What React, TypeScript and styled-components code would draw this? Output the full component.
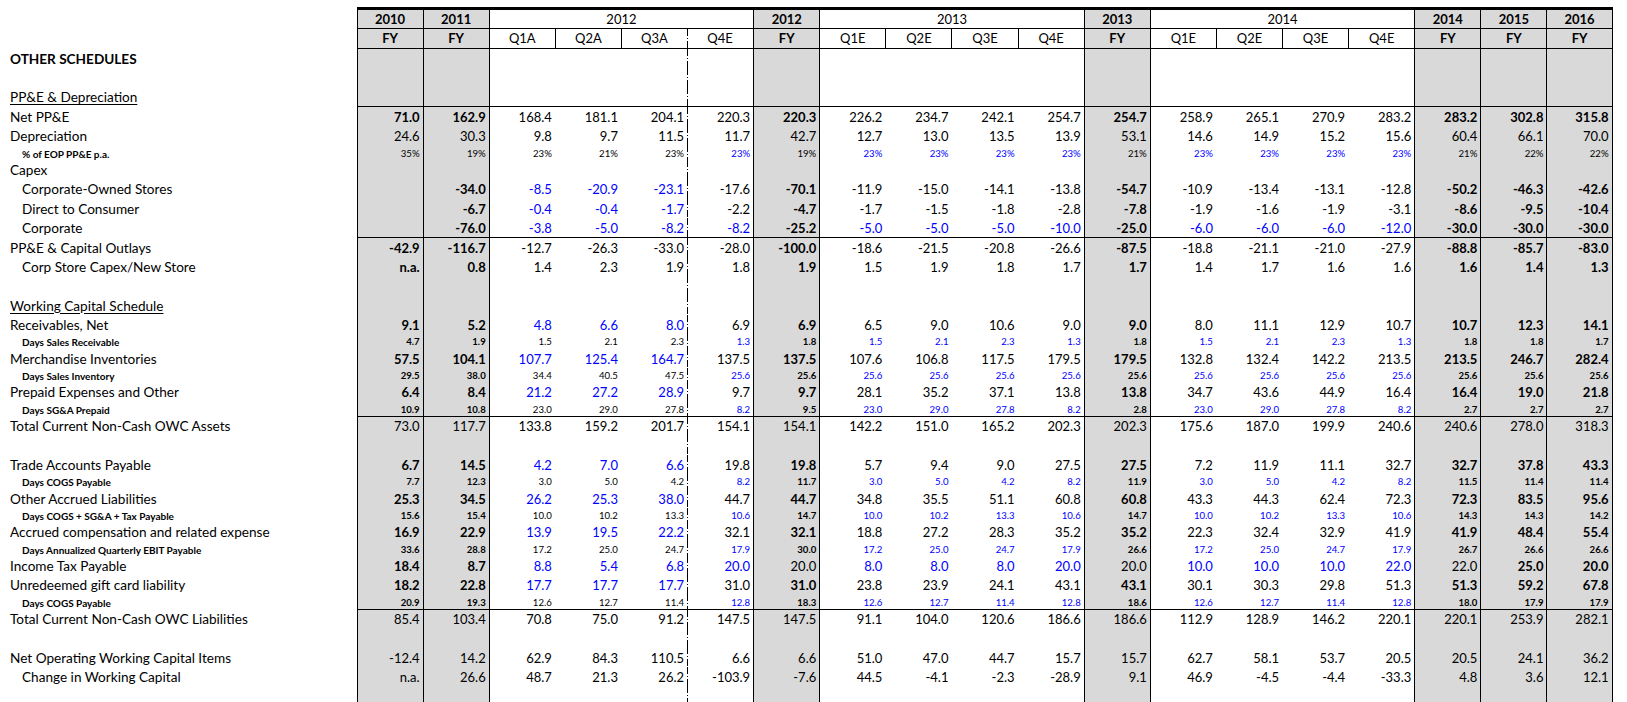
import React from "react";
import styled, { createGlobalStyle, css } from "styled-components";

const N = 19.4;
const S = 14.3;
const LABEL_W = 356.5;
const COL_W = 66.12;

type Lead = "solid" | "dash" | "none";

const GlobalStyle = createGlobalStyle`
  html, body {
    margin: 0;
    padding: 0;
    background: #ffffff;
    overflow: hidden;
  }
  body {
    font-family: Lato, "Liberation Sans", Arial, sans-serif;
    color: #000000;
  }
`;

const Sheet = styled.div`
  display: flex;
  flex-direction: column;
  width: 1627px;
  padding-top: 7px;
`;

const DataCell = styled.div<{
  $fy?: boolean;
  $lead: Lead;
  $last?: boolean;
  $bold?: boolean;
  $blue?: boolean;
  $small?: boolean;
  $center?: boolean;
  $span?: number;
}>`
  box-sizing: border-box;
  min-width: 0;
  display: flex;
  align-items: ${(p) => (p.$center ? "center" : "flex-end")};
  justify-content: ${(p) => (p.$center ? "center" : "flex-end")};
  padding: ${(p) => (p.$center ? "0" : "0 3px 1px 0")};
  grid-column: ${(p) => (p.$span ? `span ${p.$span}` : "auto")};
  background-color: ${(p) => (p.$fy ? "#d9d9d9" : "#ffffff")};
  border-left: ${(p) => (p.$lead === "solid" ? "1px solid #000" : "0")};
  border-right: ${(p) => (p.$last ? "1px solid #000" : "0")};
  ${(p) =>
    p.$lead === "dash" &&
    css`
      background-image: repeating-linear-gradient(
        to bottom,
        #000 0 7px,
        transparent 7px 9px,
        #000 9px 10px,
        transparent 10px 12px
      );
      background-size: 1px 100%;
      background-repeat: no-repeat;
      background-position: left top;
    `}
  font-size: ${(p) => (p.$small ? 9.6 : 13)}px;
  line-height: ${(p) => (p.$small ? 10 : 15)}px;
  font-weight: ${(p) => (p.$bold ? 700 : 400)};
  color: ${(p) => (p.$blue ? "#0000ff" : "#000000")};
  white-space: nowrap;
`;

const Row = styled.div<{ $h: number; $rule?: number }>`
  display: grid;
  grid-template-columns: ${LABEL_W}px repeat(19, ${COL_W}px);
  height: ${(p) => p.$h}px;
  ${(p) =>
    p.$rule
      ? css`
          & > ${DataCell} {
            border-top: ${p.$rule}px solid #000;
          }
        `
      : ""}
`;

const LabelCell = styled.div<{
  $indent?: boolean;
  $small?: boolean;
  $bold?: boolean;
  $underline?: boolean;
}>`
  display: flex;
  align-items: flex-end;
  padding: 0 0 1px ${(p) => (p.$indent || p.$small ? 22 : 10)}px;
  font-size: ${(p) => (p.$small ? 10 : 13.6)}px;
  line-height: ${(p) => (p.$small ? 10 : 15)}px;
  font-weight: ${(p) => (p.$bold || p.$small ? 700 : 400)};
  text-decoration: ${(p) => (p.$underline ? "underline" : "none")};
  text-underline-offset: 2px;
  white-space: nowrap;
`;

const FY_COLS = [0, 1, 6, 11, 16, 17, 18];
const SOLID_COLS = [0, 1, 2, 6, 7, 11, 12, 16, 17, 18];
const A_COLS = [2, 3, 4];
const E_COLS = [5, 7, 8, 9, 10, 12, 13, 14, 15];

const bodyLead = (i: number): Lead =>
  i === 5 ? "dash" : SOLID_COLS.includes(i) ? "solid" : "none";

type BoldSpec = "fy" | "none" | number[];
type BlueSpec = "A" | "E" | "AE" | "none";

interface RowDef {
  label?: string;
  vals?: string;
  small?: boolean;
  indent?: boolean;
  bold?: BoldSpec;
  blue?: BlueSpec;
  rule?: boolean;
  labelBold?: boolean;
  underline?: boolean;
}

const HEAD1: { t: string; fy?: boolean; span?: number }[] = [
  { t: "2010", fy: true },
  { t: "2011", fy: true },
  { t: "2012", span: 4 },
  { t: "2012", fy: true },
  { t: "2013", span: 4 },
  { t: "2013", fy: true },
  { t: "2014", span: 4 },
  { t: "2014", fy: true },
  { t: "2015", fy: true },
  { t: "2016", fy: true },
];

const HEAD2 = [
  "FY", "FY", "Q1A", "Q2A", "Q3A", "Q4E", "FY", "Q1E", "Q2E", "Q3E", "Q4E",
  "FY", "Q1E", "Q2E", "Q3E", "Q4E", "FY", "FY", "FY",
];

const ROWS: RowDef[] = [
  { label: "OTHER SCHEDULES", labelBold: true, rule: true },
  {},
  { label: "PP&E & Depreciation", underline: true },
  {
    label: "Net PP&E", rule: true, bold: "fy",
    vals: "71.0 162.9 168.4 181.1 204.1 220.3 220.3 226.2 234.7 242.1 254.7 254.7 258.9 265.1 270.9 283.2 283.2 302.8 315.8",
  },
  {
    label: "Depreciation",
    vals: "24.6 30.3 9.8 9.7 11.5 11.7 42.7 12.7 13.0 13.5 13.9 53.1 14.6 14.9 15.2 15.6 60.4 66.1 70.0",
  },
  {
    label: "% of EOP PP&E p.a.", small: true, blue: "E",
    vals: "35% 19% 23% 21% 23% 23% 19% 23% 23% 23% 23% 21% 23% 23% 23% 23% 21% 22% 22%",
  },
  { label: "Capex" },
  {
    label: "Corporate-Owned Stores", indent: true, bold: "fy", blue: "A",
    vals: "_ -34.0 -8.5 -20.9 -23.1 -17.6 -70.1 -11.9 -15.0 -14.1 -13.8 -54.7 -10.9 -13.4 -13.1 -12.8 -50.2 -46.3 -42.6",
  },
  {
    label: "Direct to Consumer", indent: true, bold: "fy", blue: "A",
    vals: "_ -6.7 -0.4 -0.4 -1.7 -2.2 -4.7 -1.7 -1.5 -1.8 -2.8 -7.8 -1.9 -1.6 -1.9 -3.1 -8.6 -9.5 -10.4",
  },
  {
    label: "Corporate", indent: true, bold: "fy", blue: "AE",
    vals: "_ -76.0 -3.8 -5.0 -8.2 -8.2 -25.2 -5.0 -5.0 -5.0 -10.0 -25.0 -6.0 -6.0 -6.0 -12.0 -30.0 -30.0 -30.0",
  },
  {
    label: "PP&E & Capital Outlays", rule: true, bold: "fy",
    vals: "-42.9 -116.7 -12.7 -26.3 -33.0 -28.0 -100.0 -18.6 -21.5 -20.8 -26.6 -87.5 -18.8 -21.1 -21.0 -27.9 -88.8 -85.7 -83.0",
  },
  {
    label: "Corp Store Capex/New Store", indent: true, bold: "fy",
    vals: "n.a. 0.8 1.4 2.3 1.9 1.8 1.9 1.5 1.9 1.8 1.7 1.7 1.4 1.7 1.6 1.6 1.6 1.4 1.3",
  },
  {},
  { label: "Working Capital Schedule", underline: true },
  {
    label: "Receivables, Net", bold: "fy", blue: "A",
    vals: "9.1 5.2 4.8 6.6 8.0 6.9 6.9 6.5 9.0 10.6 9.0 9.0 8.0 11.1 12.9 10.7 10.7 12.3 14.1",
  },
  {
    label: "Days Sales Receivable", small: true, bold: "fy", blue: "E",
    vals: "4.7 1.9 1.5 2.1 2.3 1.3 1.8 1.5 2.1 2.3 1.3 1.8 1.5 2.1 2.3 1.3 1.8 1.8 1.7",
  },
  {
    label: "Merchandise Inventories", bold: "fy", blue: "A",
    vals: "57.5 104.1 107.7 125.4 164.7 137.5 137.5 107.6 106.8 117.5 179.5 179.5 132.8 132.4 142.2 213.5 213.5 246.7 282.4",
  },
  {
    label: "Days Sales Inventory", small: true, bold: "fy", blue: "E",
    vals: "29.5 38.0 34.4 40.5 47.5 25.6 25.6 25.6 25.6 25.6 25.6 25.6 25.6 25.6 25.6 25.6 25.6 25.6 25.6",
  },
  {
    label: "Prepaid Expenses and Other", bold: "fy", blue: "A",
    vals: "6.4 8.4 21.2 27.2 28.9 9.7 9.7 28.1 35.2 37.1 13.8 13.8 34.7 43.6 44.9 16.4 16.4 19.0 21.8",
  },
  {
    label: "Days SG&A Prepaid", small: true, bold: "fy", blue: "E",
    vals: "10.9 10.8 23.0 29.0 27.8 8.2 9.5 23.0 29.0 27.8 8.2 2.8 23.0 29.0 27.8 8.2 2.7 2.7 2.7",
  },
  {
    label: "Total Current Non-Cash OWC Assets", rule: true,
    vals: "73.0 117.7 133.8 159.2 201.7 154.1 154.1 142.2 151.0 165.2 202.3 202.3 175.6 187.0 199.9 240.6 240.6 278.0 318.3",
  },
  {},
  {
    label: "Trade Accounts Payable", bold: "fy", blue: "A",
    vals: "6.7 14.5 4.2 7.0 6.6 19.8 19.8 5.7 9.4 9.0 27.5 27.5 7.2 11.9 11.1 32.7 32.7 37.8 43.3",
  },
  {
    label: "Days COGS Payable", small: true, bold: "fy", blue: "E",
    vals: "7.7 12.3 3.0 5.0 4.2 8.2 11.7 3.0 5.0 4.2 8.2 11.9 3.0 5.0 4.2 8.2 11.5 11.4 11.4",
  },
  {
    label: "Other Accrued Liabilities", bold: "fy", blue: "A",
    vals: "25.3 34.5 26.2 25.3 38.0 44.7 44.7 34.8 35.5 51.1 60.8 60.8 43.3 44.3 62.4 72.3 72.3 83.5 95.6",
  },
  {
    label: "Days COGS + SG&A + Tax Payable", small: true, bold: "fy", blue: "E",
    vals: "15.6 15.4 10.0 10.2 13.3 10.6 14.7 10.0 10.2 13.3 10.6 14.7 10.0 10.2 13.3 10.6 14.3 14.3 14.2",
  },
  {
    label: "Accrued compensation and related expense", bold: "fy", blue: "A",
    vals: "16.9 22.9 13.9 19.5 22.2 32.1 32.1 18.8 27.2 28.3 35.2 35.2 22.3 32.4 32.9 41.9 41.9 48.4 55.4",
  },
  {
    label: "Days Annualized Quarterly EBIT Payable", small: true, bold: "fy", blue: "E",
    vals: "33.6 28.8 17.2 25.0 24.7 17.9 30.0 17.2 25.0 24.7 17.9 26.6 17.2 25.0 24.7 17.9 26.7 26.6 26.6",
  },
  {
    label: "Income Tax Payable", bold: [0, 1, 17, 18], blue: "AE",
    vals: "18.4 8.7 8.8 5.4 6.8 20.0 20.0 8.0 8.0 8.0 20.0 20.0 10.0 10.0 10.0 22.0 22.0 25.0 20.0",
  },
  {
    label: "Unredeemed gift card liability", bold: "fy", blue: "A",
    vals: "18.2 22.8 17.7 17.7 17.7 31.0 31.0 23.8 23.9 24.1 43.1 43.1 30.1 30.3 29.8 51.3 51.3 59.2 67.8",
  },
  {
    label: "Days COGS Payable", small: true, bold: "fy", blue: "E",
    vals: "20.9 19.3 12.6 12.7 11.4 12.8 18.3 12.6 12.7 11.4 12.8 18.6 12.6 12.7 11.4 12.8 18.0 17.9 17.9",
  },
  {
    label: "Total Current Non-Cash OWC Liabilities", rule: true,
    vals: "85.4 103.4 70.8 75.0 91.2 147.5 147.5 91.1 104.0 120.6 186.6 186.6 112.9 128.9 146.2 220.1 220.1 253.9 282.1",
  },
  {},
  {
    label: "Net Operating Working Capital Items",
    vals: "-12.4 14.2 62.9 84.3 110.5 6.6 6.6 51.0 47.0 44.7 15.7 15.7 62.7 58.1 53.7 20.5 20.5 24.1 36.2",
  },
  {
    label: "Change in Working Capital", indent: true,
    vals: "n.a. 26.6 48.7 21.3 26.2 -103.9 -7.6 44.5 -4.1 -2.3 -28.9 9.1 46.9 -4.5 -4.4 -33.3 4.8 3.6 12.1",
  },
  {},
  {},
];

const isBold = (spec: BoldSpec | undefined, i: number) => {
  if (!spec || spec === "none") return false;
  if (spec === "fy") return FY_COLS.includes(i);
  return spec.includes(i);
};

const isBlue = (spec: BlueSpec | undefined, i: number) => {
  if (!spec || spec === "none") return false;
  if (spec === "A") return A_COLS.includes(i);
  if (spec === "E") return E_COLS.includes(i);
  return A_COLS.includes(i) || E_COLS.includes(i);
};

const EMPTY = Array.from({ length: 19 }, () => "_");

function BodyRow({ def }: { def: RowDef }) {
  const vals = def.vals ? def.vals.split(" ") : EMPTY;
  return (
    <Row $h={def.small ? S : N} $rule={def.rule ? 1 : 0}>
      <LabelCell
        $indent={def.indent}
        $small={def.small}
        $bold={def.labelBold}
        $underline={def.underline}
      >
        {def.label ?? ""}
      </LabelCell>
      {vals.map((v, i) => (
        <DataCell
          key={i}
          $fy={FY_COLS.includes(i)}
          $lead={bodyLead(i)}
          $last={i === 18}
          $small={def.small}
          $bold={isBold(def.bold, i)}
          $blue={isBlue(def.blue, i)}
        >
          {v === "_" ? "" : v}
        </DataCell>
      ))}
    </Row>
  );
}

export default function App() {
  return (
    <>
      <GlobalStyle />
      <Sheet>
        <Row $h={21.3} $rule={3}>
          <LabelCell />
          {HEAD1.map((h, i) => (
            <DataCell
              key={i}
              $center
              $fy={h.fy}
              $span={h.span}
              $lead="solid"
              $last={i === HEAD1.length - 1}
              $bold={h.fy}
            >
              {h.t}
            </DataCell>
          ))}
        </Row>
        <Row $h={20} $rule={1}>
          <LabelCell />
          {HEAD2.map((t, i) => (
            <DataCell
              key={i}
              $center
              $fy={FY_COLS.includes(i)}
              $lead={i === 5 ? "dash" : "solid"}
              $last={i === 18}
              $bold={FY_COLS.includes(i)}
            >
              {t}
            </DataCell>
          ))}
        </Row>
        {ROWS.map((r, i) => (
          <BodyRow key={i} def={r} />
        ))}
      </Sheet>
    </>
  );
}
